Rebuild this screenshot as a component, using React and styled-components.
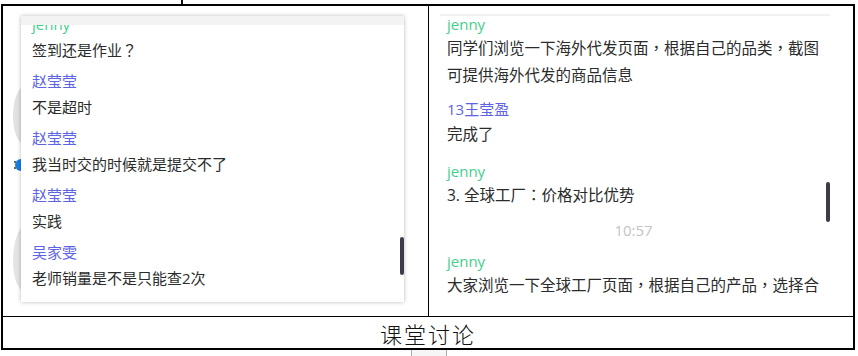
import React from 'react';
import styled, { createGlobalStyle } from 'styled-components';

const GlobalStyle = createGlobalStyle`
    html, body {
        margin: 0;
        background: #fff;
    }
    body {
        font-family: "Open Sans", "Noto Sans CJK SC", sans-serif;
    }
`;

const leftMessages = [
    { name: 'jenny', role: 'teacher', text: '签到还是作业？' },
    { name: '赵莹莹', text: '不是超时' },
    { name: '赵莹莹', text: '我当时交的时候就是提交不了' },
    { name: '赵莹莹', text: '实践' },
    { name: '吴家雯', text: '老师销量是不是只能查2次' },
];

const rightItems = [
    { name: 'jenny', role: 'teacher', text: '同学们浏览一下海外代发页面，根据自己的品类，截图可提供海外代发的商品信息' },
    { name: '13王莹盈', text: '完成了', gap: 12, nameLh: 24 },
    { name: 'jenny', role: 'teacher', text: '3. 全球工厂：价格对比优势', gap: 0 },
    { time: '10:57' },
    { name: 'jenny', role: 'teacher', text: '大家浏览一下全球工厂页面，根据自己的产品，选择合适的商品' },
];

const withPunct = text =>
    text.split(/([，：？])/).map((part, i) =>
        /^[，：？]$/.test(part) ? <Punct key={i}>{part}</Punct> : part
    );

// left edge of the first screenshot: bits of the app behind the chat panel
const BackdropBits = () => (
    <svg width="18" height="286" viewBox="0 0 18 286">
        <path d="M18 72 C13 76 10 88 10 100 C10 113 13 122 18 127 Z" fill="#e2e2e2" />
        <path d="M18 212 C13 218 10 232 10 245 C10 259 13 268 18 274 Z" fill="#e4e4e4" />
        <circle cx="12" cy="146" r="1" fill="#333" />
        <circle cx="12" cy="152" r="1" fill="#333" />
        <path d="M18 143 A6 6 0 0 0 18 155 Z" fill="#1a7de0" />
    </svg>
);

const App = () => (
    <Page>
        <GlobalStyle />
        <TopMark />
        <Table>
            <LeftCell>
                <Backdrop>
                    <BackdropBits />
                </Backdrop>
                <ChatPanel>
                    <PanelHead />
                    <ScrollArea>
                        <LeftList>
                            {leftMessages.map((m, i) => (
                                <Message key={i} gap={4}>
                                    <Name role={m.role} lh={26}>{m.name}</Name>
                                    <Text size={15}>{withPunct(m.text)}</Text>
                                </Message>
                            ))}
                        </LeftList>
                        <ScrollThumb top={212} height={38} />
                    </ScrollArea>
                </ChatPanel>
            </LeftCell>

            <RightCell>
                <RightPanel>
                    <RightList>
                        {rightItems.map((m, i) =>
                            m.time ? (
                                <Time key={i}>{m.time}</Time>
                            ) : (
                                <Message key={i} gap={m.gap ?? 8}>
                                    <Name role={m.role} lh={m.nameLh ?? 22}>{m.name}</Name>
                                    <Text size={15.5}>{withPunct(m.text)}</Text>
                                </Message>
                            )
                        )}
                    </RightList>
                    <ScrollThumb top={166} height={40} />
                </RightPanel>
            </RightCell>

            <Caption>课堂讨论</Caption>
        </Table>
        <Tab />
    </Page>
);

const Page = styled.div`
    width: 858px;
    height: 356px;
    overflow: hidden;
`;

const TopMark = styled.div`
    width: 2px;
    height: 4px;
    margin-left: 181px;
    background: #111;
`;

const Table = styled.div`
    box-sizing: border-box;
    width: 854px;
    margin-left: 1px;
    border: 2px solid #000;
    display: grid;
    grid-template-columns: 425px 1fr;
    grid-template-rows: 310px 32px;
`;

const LeftCell = styled.div`
    display: flex;
    padding-top: 10px;
    overflow: hidden;
`;

const Backdrop = styled.div`
    width: 18px;
    height: 286px;
    flex-shrink: 0;
`;

const ChatPanel = styled.div`
    width: 383px;
    height: 286px;
    display: flex;
    flex-direction: column;
    background: #fff;
    box-shadow: 0 0 4px rgba(0, 0, 0, 0.28);
`;

const PanelHead = styled.div`
    height: 9px;
    background: #f3f3f3;
    flex-shrink: 0;
`;

const ScrollArea = styled.div`
    position: relative;
    flex: 1;
    overflow: hidden;
`;

const LeftList = styled.div`
    margin-top: -14px;
    padding-left: 11px;
`;

const ScrollThumb = styled.div`
    position: absolute;
    right: 0;
    top: ${p => p.top}px;
    width: 4px;
    height: ${p => p.height}px;
    border-radius: 2px;
    background: #3c3d48;
`;

const Message = styled.div`
    margin-bottom: ${p => p.gap}px;
`;

const Name = styled.div`
    font-size: 15px;
    line-height: ${p => p.lh}px;
    color: ${p => (p.role === 'teacher' ? '#3fd08d' : '#5e63e6')};
    white-space: nowrap;
`;

const Text = styled.div`
    font-size: ${p => p.size}px;
    line-height: 27px;
    color: #2b2b2b;
`;

const Punct = styled.span`
    font-family: "Noto Sans CJK TC", sans-serif;
    line-height: 0;
`;

const Time = styled.div`
    margin: 10px 0 9px -7px;
    text-align: center;
    font-size: 15px;
    line-height: 22px;
    color: #c4c4c4;
`;

const RightCell = styled.div`
    border-left: 1px solid #000;
    padding: 8px 0 0 11px;
    overflow: hidden;
`;

const RightPanel = styled.div`
    position: relative;
    box-sizing: border-box;
    width: 390px;
    height: 288px;
    border-top: 2px solid #f1f1f1;
    overflow: hidden;
`;

const RightList = styled.div`
    width: 380px;
    margin-top: -3px;
    padding-left: 7px;
`;

const Caption = styled.div`
    grid-column: 1 / -1;
    border-top: 1px solid #000;
    display: flex;
    align-items: center;
    justify-content: center;
    font-family: "Noto Sans CJK SC", sans-serif;
    font-weight: 300;
    font-size: 22px;
    letter-spacing: 2px;
    color: #111;
`;

const Tab = styled.div`
    width: 34px;
    height: 8px;
    margin-left: 411px;
    border-left: 1px solid #aaa;
    border-right: 1px solid #aaa;
    background: #f6f6f6;
`;

export default App;
